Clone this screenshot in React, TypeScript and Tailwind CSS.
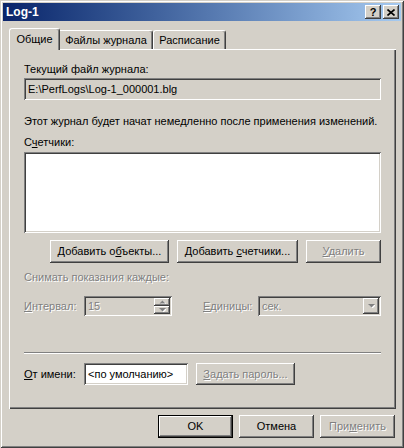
import React from "react";

const raised =
  "shadow-[inset_-1px_-1px_#404040,inset_1px_1px_#ffffff,inset_-2px_-2px_#808080,inset_2px_2px_#d4d0c8]";
const sunken =
  "shadow-[inset_1px_1px_#808080,inset_-1px_-1px_#ffffff,inset_2px_2px_#404040,inset_-2px_-2px_#d4d0c8]";
const disabledText = "text-[#808080] [text-shadow:1px_1px_0_#ffffff]";

function Btn({
  children,
  w,
  disabled,
}: {
  children: React.ReactNode;
  w: string;
  disabled?: boolean;
}) {
  return (
    <div
      className={`${w} h-[23px] flex items-center justify-center bg-[#d4d0c8] ${raised} ${
        disabled ? disabledText : "text-black"
      }`}
    >
      <span>{children}</span>
    </div>
  );
}

function Arrow({ up, disabled }: { up?: boolean; disabled?: boolean }) {
  const fill = disabled ? "#808080" : "#000000";
  return (
    <svg width="7" height="4" viewBox="0 0 7 4" className="block">
      {disabled && (
        <polygon
          points={up ? "1.5,4 4.5,1 7.5,4" : "1,1 8,1 4.5,4.5"}
          fill="#ffffff"
        />
      )}
      <polygon points={up ? "0.5,3.5 3.5,0.5 6.5,3.5" : "0,0 7,0 3.5,3.5"} fill={fill} />
    </svg>
  );
}

export default function App() {
  return (
    <div className="w-[404px] h-[448px] bg-[#d4d0c8] p-[3px] flex flex-col font-['Liberation_Sans',Arial,sans-serif] text-[11px] leading-[13px] text-black shadow-[inset_1px_1px_#d4d0c8,inset_-1px_-1px_#404040,inset_2px_2px_#ffffff,inset_-2px_-2px_#808080]">
      {/* Title bar */}
      <div className="h-[18px] flex items-center justify-between pl-[3px] pr-[2px] bg-linear-to-r from-[#0a246a] to-[#a6caf0]">
        <span className="font-bold text-white text-[12px]">Log-1</span>
        <div className="flex gap-[2px]">
          <div
            className={`w-[16px] h-[14px] flex items-center justify-center bg-[#d4d0c8] ${raised} font-bold text-[11px] leading-none text-black`}
          >
            ?
          </div>
          <div
            className={`w-[16px] h-[14px] flex items-center justify-center bg-[#d4d0c8] ${raised}`}
          >
            <svg width="8" height="7" viewBox="0 0 8 7" className="block">
              <path d="M0.5 0.5 L7.5 6.5 M7.5 0.5 L0.5 6.5" stroke="#000" strokeWidth="1.6" />
            </svg>
          </div>
        </div>
      </div>

      <div className="flex flex-col pl-[6px] pr-[5px]">
        {/* Tabs */}
        <div className="mt-[7px] h-[21px] flex items-end">
          <div className="relative z-10 -mb-px h-[22px] w-[51px] flex items-center justify-center bg-[#d4d0c8] border-t border-l border-white border-r border-r-[#404040] rounded-tl-[3px] rounded-tr-[3px] shadow-[inset_-1px_0_#808080]">
            Общие
          </div>
          <div className="h-[19px] w-[93px] flex items-center justify-center pt-[1px] bg-[#d4d0c8] border-t border-white border-r border-r-[#404040] rounded-tr-[3px] shadow-[inset_-1px_0_#808080]">
            Файлы журнала
          </div>
          <div className="h-[19px] w-[73px] flex items-center justify-center pt-[1px] bg-[#d4d0c8] border-t border-l border-white border-r border-r-[#404040] rounded-tl-[3px] rounded-tr-[3px] shadow-[inset_-1px_0_#808080]">
            Расписание
          </div>
        </div>

        {/* Panel */}
        <div className="w-[387px] h-[360px] flex flex-col px-[15px] pt-[14px] shadow-[inset_1px_1px_#ffffff,inset_-1px_-1px_#404040,inset_-2px_-2px_#808080]">
          <div>Текущий файл журнала:</div>
          <div className={`mt-[2px] h-[22px] flex items-center pl-[4px] bg-[#d4d0c8] ${sunken}`}>
            E:\PerfLogs\Log-1_000001.blg
          </div>

          <div className="mt-[15px]">
            Этот журнал будет начат немедленно после применения изменений.
          </div>

          <div className="mt-[8px]">
            С<span className="underline">ч</span>етчики:
          </div>
          <div className={`mt-[3px] h-[81px] bg-white ${sunken}`} />

          <div className="mt-[7px] flex justify-end gap-[8px]">
            <Btn w="w-[119px]">
              Добавить о<span className="underline">б</span>ъекты...
            </Btn>
            <Btn w="w-[121px]">
              Добавить <span className="underline">с</span>четчики...
            </Btn>
            <Btn w="w-[75px]" disabled>
              <span className="underline">У</span>далить
            </Btn>
          </div>

          <div className={`mt-[8px] ${disabledText}`}>Снимать показания каждые:</div>

          <div className="mt-[12px] h-[20px] flex items-center">
            <div className={`w-[60px] ${disabledText}`}>
              <span className="underline">И</span>нтервал:
            </div>
            <div className={`w-[88px] h-[20px] flex items-stretch bg-[#d4d0c8] ${sunken}`}>
              <div className={`flex-1 flex items-center pl-[4px] ${disabledText}`}>15</div>
              <div className="flex flex-col py-[2px] pr-[2px]">
                <div className={`w-[16px] h-[8px] flex items-center justify-center bg-[#d4d0c8] ${raised}`}>
                  <Arrow up disabled />
                </div>
                <div className={`w-[16px] h-[8px] flex items-center justify-center bg-[#d4d0c8] ${raised}`}>
                  <Arrow disabled />
                </div>
              </div>
            </div>
            <div className={`ml-[31px] w-[55px] ${disabledText}`}>
              <span className="underline">Е</span>диницы:
            </div>
            <div className={`w-[123px] h-[20px] flex items-stretch bg-[#d4d0c8] ${sunken}`}>
              <div className={`flex-1 flex items-center pl-[4px] ${disabledText}`}>сек.</div>
              <div className="py-[2px] pr-[2px] flex">
                <div className={`w-[16px] h-[16px] flex items-center justify-center bg-[#d4d0c8] ${raised}`}>
                  <Arrow disabled />
                </div>
              </div>
            </div>
          </div>

          <div className="mt-[36px] border-t border-t-[#808080] border-b border-b-white" />

          <div className="mt-[9px] h-[22px] flex items-center">
            <div className="w-[60px]">
              <span className="underline">О</span>т имени:
            </div>
            <div className={`w-[104px] h-[22px] flex items-center pl-[4px] bg-white ${sunken}`}>
              &lt;по умолчанию&gt;
            </div>
            <div className="ml-[8px]">
              <div
                className={`w-[99px] h-[22px] flex items-center justify-center bg-[#d4d0c8] ${raised} ${disabledText}`}
              >
                <span>
                  <span className="underline">З</span>адать пароль...
                </span>
              </div>
            </div>
          </div>
        </div>

        {/* Bottom buttons */}
        <div className="mt-[6px] pr-[1px] flex justify-end gap-[6px]">
          <div className="w-[75px] h-[23px] flex items-center justify-center bg-[#d4d0c8] shadow-[inset_0_0_0_1px_#000000,inset_-2px_-2px_#404040,inset_2px_2px_#ffffff,inset_-3px_-3px_#808080]">
            OK
          </div>
          <Btn w="w-[75px]">Отмена</Btn>
          <Btn w="w-[75px]" disabled>
            При<span className="underline">м</span>енить
          </Btn>
        </div>
      </div>
    </div>
  );
}
